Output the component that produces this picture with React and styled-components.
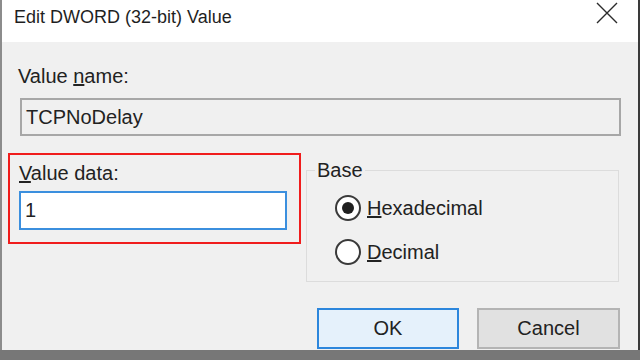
import styled, { createGlobalStyle } from "styled-components";

const GlobalStyle = createGlobalStyle`
    html, body {
        margin: 0;
        padding: 0;
        background: #f0f0f0;
    }

    body {
        font-family: "Liberation Sans", Arial, sans-serif;
        color: #1e1e1e;
    }
`;

export default function App() {
    return(
        <>
            <GlobalStyle />
            <Window>
                <TitleBar>
                    <span className="title">Edit DWORD (32-bit) Value</span>
                    <CloseIcon width="22" height="22" viewBox="0 0 22 22">
                        <path d="M1 1 L21 21 M21 1 L1 21" stroke="#2b2b2b" strokeWidth="1.4" fill="none" />
                    </CloseIcon>
                </TitleBar>
                <Body>
                    <Label>Value <u>n</u>ame:</Label>
                    <NameField>TCPNoDelay</NameField>
                    <MiddleRow>
                        <Highlight>
                            <Label><u>V</u>alue data:</Label>
                            <DataInput>1</DataInput>
                        </Highlight>
                        <Group>
                            <legend>Base</legend>
                            <Radio checked label="H" rest="exadecimal" />
                            <Radio label="D" rest="ecimal" />
                        </Group>
                    </MiddleRow>
                    <ButtonRow>
                        <Button primary>OK</Button>
                        <Button>Cancel</Button>
                    </ButtonRow>
                </Body>
                <Taskbar />
            </Window>
        </>
    );
}

function Radio({ checked, label, rest }) {
    return(
        <RadioRow>
            <RadioCircle checked={checked} />
            <span><u>{label}</u>{rest}</span>
        </RadioRow>
    );
}

const Window = styled.div`
    width: 640px;
    height: 360px;
    display: flex;
    flex-direction: column;
    overflow: hidden;
`;

const TitleBar = styled.div`
    height: 42px;
    flex-shrink: 0;
    background: #ffffff;
    border-left: 2px solid #8c8c8c;
    border-right: 2px solid #3a3a3a;
    display: flex;
    justify-content: space-between;
    padding-left: 12px;
    padding-right: 20px;

    .title {
        font-size: 18px;
        line-height: 20px;
        margin-top: 7px;
        color: #1f1f1f;
    }
`;

const CloseIcon = styled.svg`
    margin-top: 2px;
`;

const Body = styled.div`
    flex: 1;
    background: #f0f0f0;
    border-left: 2px solid #8c8c8c;
    border-right: 2px solid #3a3a3a;
    display: flex;
    flex-direction: column;
    padding-top: 22px;
    padding-left: 16px;
`;

const Label = styled.div`
    font-size: 20px;
    line-height: 24px;
    color: #222;
`;

const NameField = styled.div`
    margin-top: 10px;
    margin-left: 2px;
    width: 593px;
    height: 34px;
    border: 2px solid #a7a7a7;
    font-size: 20px;
    line-height: 34px;
    padding-left: 4px;
    box-sizing: content-box;
    color: #222;
`;

const MiddleRow = styled.div`
    display: flex;
    align-items: flex-start;
    margin-top: 17px;
    margin-left: -10px;
`;

const Highlight = styled.div`
    width: 268px;
    height: 75px;
    border: 2px solid #f01c1c;
    padding: 6px 12px 6px 9px;
    box-sizing: content-box;
    display: flex;
    flex-direction: column;
    gap: 6px;
`;

const DataInput = styled.div`
    height: 35px;
    border: 2px solid #3b8fde;
    background: #ffffff;
    font-size: 20px;
    line-height: 35px;
    padding-left: 4px;
    color: #222;
`;

const Group = styled.fieldset`
    margin: 7px 0 0 5px;
    padding: 0;
    width: 311px;
    height: 120px;
    border: 1px solid #dcdcdc;
    display: flex;
    flex-direction: column;
    gap: 18px;

    legend {
        font-size: 20px;
        line-height: 20px;
        margin-left: 8px;
        padding: 0 2px;
        color: #222;
    }
`;

const RadioRow = styled.label`
    display: flex;
    align-items: center;
    gap: 6px;
    margin-left: 28px;
    font-size: 20px;
    line-height: 24px;
    color: #222;
    &:first-of-type {
        margin-top: 15px;
    }
`;

const RadioCircle = styled.span`
    width: 22px;
    height: 22px;
    border-radius: 50%;
    border: 2px solid #3a3a3a;
    background: #ffffff;
    position: relative;
    flex-shrink: 0;

    &::after {
        content: "";
        display: ${props => props.checked ? "block" : "none"};
        position: absolute;
        left: 5px;
        top: 5px;
        width: 12px;
        height: 12px;
        border-radius: 50%;
        background: #1f1f1f;
    }
`;

const ButtonRow = styled.div`
    display: flex;
    gap: 18px;
    margin-top: 26px;
    margin-left: 299px;
`;

const Button = styled.div`
    width: ${props => props.primary ? "138px" : "139px"};
    height: 37px;
    border: 2px solid ${props => props.primary ? "#2c86dc" : "#b4b4b4"};
    background: ${props => props.primary ? "#e5f1fb" : "#e1e1e1"};
    display: flex;
    align-items: center;
    justify-content: center;
    font-size: 20px;
    color: #222;
`;

const Taskbar = styled.div`
    height: 10px;
    flex-shrink: 0;
    background: #777777;
`;
